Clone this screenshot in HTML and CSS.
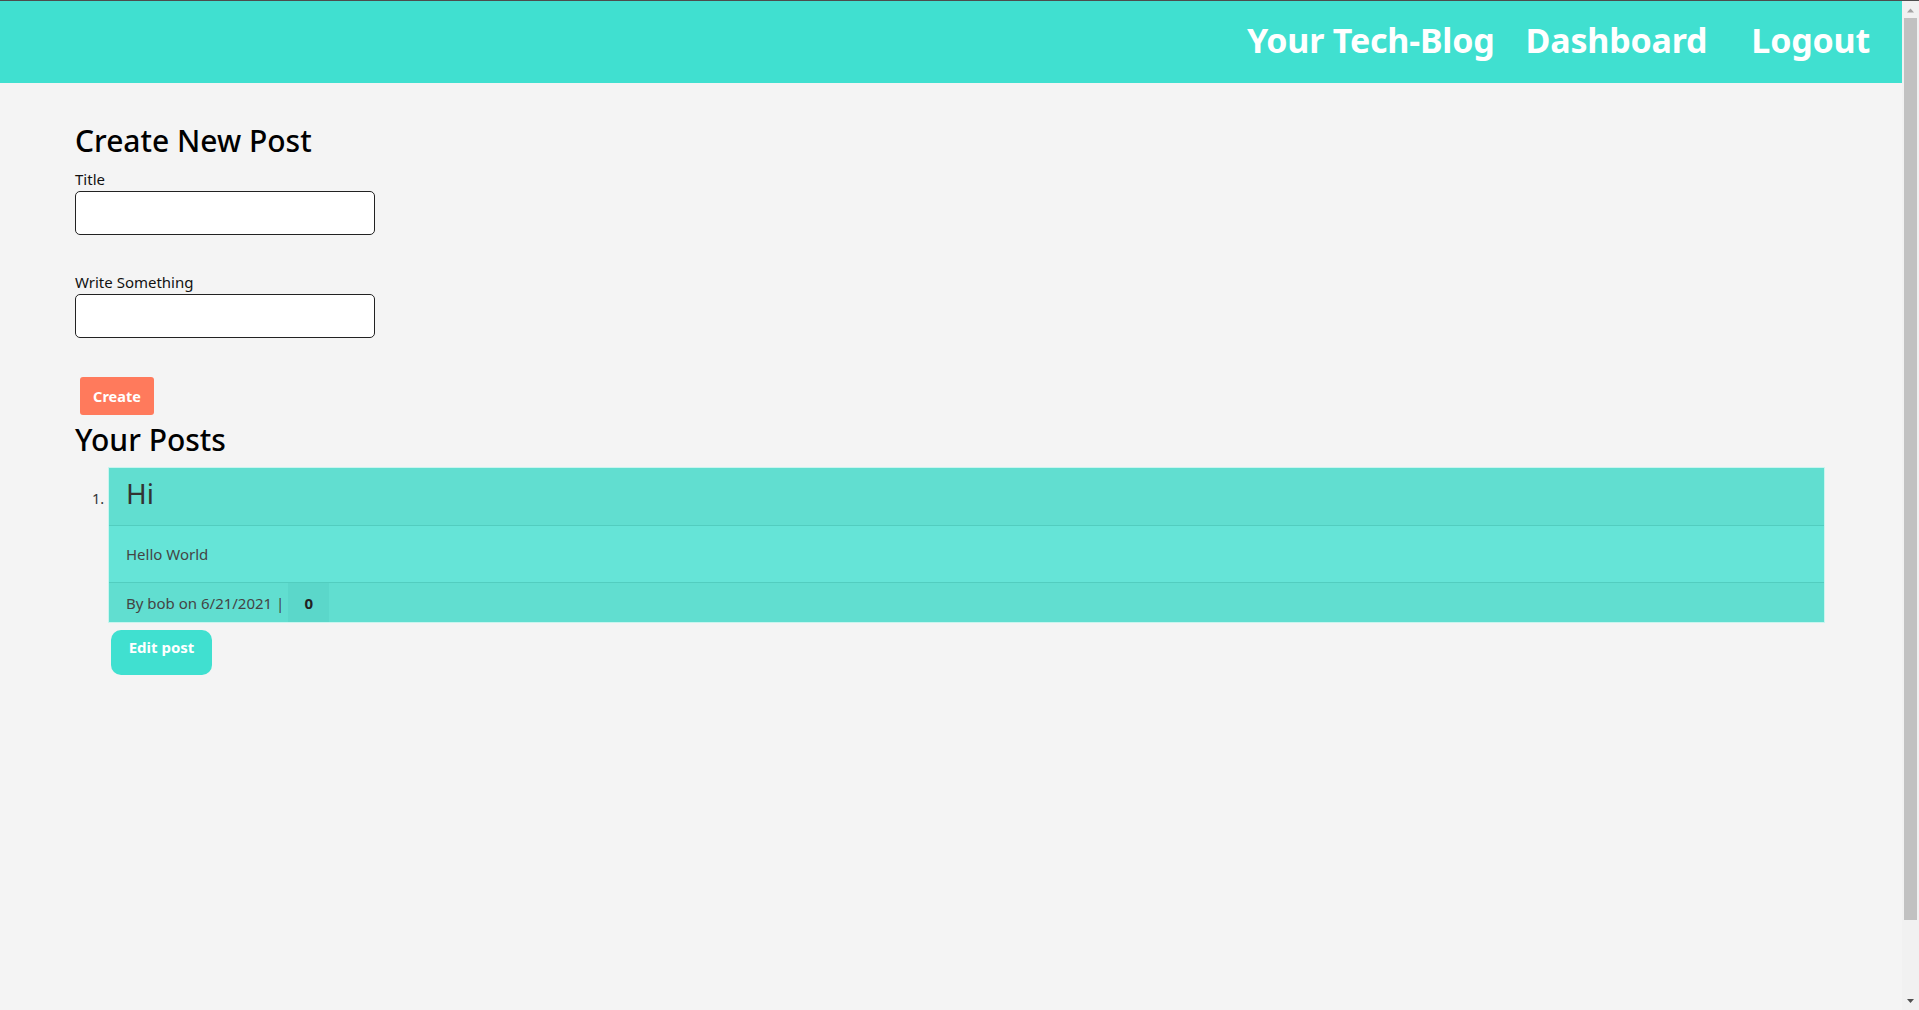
FILE: index.html
```html
<!DOCTYPE html>
<html lang="en">
<head>
<meta charset="utf-8">
<title>Your Tech-Blog – Dashboard</title>
<link rel="stylesheet" href="styles.css">
</head>
<body>
<div class="page">
  <header class="site-header">
    <nav class="site-nav">
      <a class="nav-link" href="#">Your Tech-Blog</a>
      <a class="nav-link" href="#">Dashboard</a>
      <a class="nav-link nav-logout" href="#">Logout</a>
    </nav>
  </header>
  <main class="dashboard">
    <section class="new-post">
      <h2 class="section-title">Create New Post</h2>
      <form class="post-form">
        <div class="field">
          <label class="field-label" for="title">Title</label>
          <input class="field-input" id="title" type="text">
        </div>
        <div class="field">
          <label class="field-label" for="content">Write Something</label>
          <input class="field-input" id="content" type="text">
        </div>
        <button class="btn-create" type="button">Create</button>
      </form>
    </section>
    <section class="your-posts">
      <h2 class="section-title">Your Posts</h2>
      <ol class="post-list">
        <li class="post-item">
          <div class="card">
            <div class="card-header"><h3 class="card-title">Hi</h3></div>
            <div class="card-body">Hello World</div>
            <div class="card-footer">
              <span class="meta">By bob on 6/21/2021 |</span>
              <span class="comment-count">0</span>
            </div>
          </div>
          <button class="btn-edit" type="button">Edit post</button>
        </li>
      </ol>
    </section>
  </main>
</div>
<div class="scrollbar" aria-hidden="true">
  <span class="sb-btn"><svg width="17" height="17" viewBox="0 0 17 17"><path class="sb-arrow-off" d="M5 11.5 L8.5 7.5 L12 11.5 Z"/></svg></span>
  <span class="sb-track"><span class="sb-thumb"></span></span>
  <span class="sb-btn"><svg width="17" height="17" viewBox="0 0 17 17"><path class="sb-arrow-on" d="M5 6 L12 6 L8.5 10 Z"/></svg></span>
</div>
</body>
</html>
```
FILE: styles.css
```css
* { box-sizing: border-box; }

html, body {
  margin: 0;
  padding: 0;
}

body {
  display: flex;
  height: 1010px;
  overflow: hidden;
  background: #f4f4f4;
  border-top: 1px solid #4d4d4d;
  font-family: "Noto Sans", "Open Sans", sans-serif;
  color: #111;
}

.page {
  flex: 1;
  min-width: 0;
}

/* fake classic scrollbar */
.scrollbar {
  width: 17px;
  flex: none;
  display: flex;
  flex-direction: column;
  background: #f1f1f1;
}

.sb-btn {
  display: block;
  height: 17px;
  flex: none;
}

.sb-btn svg { display: block; }

.sb-arrow-off { fill: #a3a3a3; }
.sb-arrow-on { fill: #505050; }

.sb-track {
  flex: 1;
  display: flex;
  flex-direction: column;
  padding: 0 2px;
}

.sb-thumb {
  display: block;
  height: 902px;
  background: #c1c1c1;
}

.site-header {
  height: 82px;
  background: #40e0d0;
}

.site-nav {
  display: flex;
  justify-content: flex-end;
  align-items: flex-start;
  gap: 31px;
  height: 100%;
  padding: 19px 32px 0 0;
}

.nav-link {
  color: #fff;
  text-decoration: none;
  font-weight: 700;
  font-size: 34px;
  line-height: 40px;
  letter-spacing: -0.2px;
}

.nav-logout { margin-left: 13px; }

.dashboard {
  padding: 0 0 0 75px;
  margin-right: 77px;
}

.section-title {
  margin: 0;
  font-size: 30px;
  font-weight: 500;
  line-height: 36px;
  color: #000;
}

.new-post .section-title { margin: 40px 0 10px; }

.post-form {
  display: flex;
  flex-direction: column;
  align-items: flex-start;
}

.field {
  display: flex;
  flex-direction: column;
  margin-bottom: 37px;
}

.field:nth-child(2) { margin-bottom: 39px; }

.field-label {
  font-size: 15px;
  line-height: 20px;
  margin-bottom: 2px;
  color: #111;
}

.field-input {
  width: 300px;
  height: 44px;
  border: 1.5px solid #222;
  border-radius: 5px;
  background: #fff;
  font: inherit;
}

.btn-create {
  margin-left: 5px;
  width: 74px;
  height: 38px;
  background: #ff7a5c;
  color: #fff;
  border: 0;
  border-radius: 3px;
  font-family: inherit;
  font-weight: 700;
  font-size: 14.5px;
  padding: 0;
}

.your-posts .section-title { margin-top: 7px; }

.post-list {
  margin: 9px 0 0;
  padding-left: 33px;
}

.post-item {
  font-size: 14.5px;
  color: #333;
}

.card {
  border: 1px solid #c9f5ef;
  background: #65e4d7;
}

.card-header {
  background: #61ded0;
  border-bottom: 1px solid #52cdbf;
  height: 58px;
  padding: 6px 17px 0;
}

.card-title {
  margin: 0;
  font-size: 28px;
  font-weight: 400;
  line-height: 38px;
  color: #333;
}

.card-body {
  height: 57px;
  padding: 0 17px;
  display: flex;
  align-items: center;
  font-size: 15px;
  color: #444;
  border-bottom: 1px solid #52cdbf;
}

.card-footer {
  background: #61ded0;
  height: 39px;
  padding: 0 0 0 17px;
  display: flex;
  align-items: stretch;
  font-size: 15px;
  color: #444;
}

.meta {
  display: flex;
  align-items: center;
  margin-right: 4px;
}

.comment-count {
  width: 41px;
  display: flex;
  align-items: center;
  justify-content: center;
  background: #5bd7ca;
  font-weight: 700;
  color: #222;
}

.btn-edit {
  margin: 7px 0 0 3px;
  width: 101px;
  height: 45px;
  background: #40e0d0;
  color: #fff;
  border: 0;
  border-radius: 10px;
  font-family: inherit;
  font-weight: 700;
  font-size: 15px;
  padding: 0 0 12px;
}
```
